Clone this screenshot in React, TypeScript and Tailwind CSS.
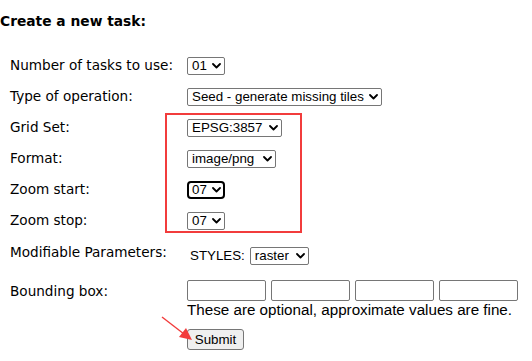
import React from "react";

const label = "font-['DejaVu_Sans',Verdana,sans-serif] text-[13.6px] text-black";
const ctl = "font-['Liberation_Sans',Arial,sans-serif] text-[13.33px] text-black";

function Chevron() {
  return (
    <svg width="9" height="6" viewBox="0 0 9 6" className="shrink-0">
      <path d="M1 1 L4.5 4.5 L8 1" fill="none" stroke="#000" strokeWidth="1.8" strokeLinecap="round" strokeLinejoin="round" />
    </svg>
  );
}

function Select({ value, width, focused }: { value: string; width: string; focused?: boolean }) {
  return (
    <div
      className={`${ctl} ${width} h-[18px] flex items-center justify-between gap-[3px] whitespace-nowrap bg-white ${
        focused ? "border-2 border-black rounded-[4px] pl-[3px] pr-[2px]" : "border border-[#767676] rounded-[2px] pl-[4px] pr-[3px]"
      }`}
    >
      <span className="leading-none">{value}</span>
      <Chevron />
    </div>
  );
}

const rows = [
  { name: "Number of tasks to use:", value: "01", width: "w-[38px]" },
  { name: "Type of operation:", value: "Seed - generate missing tiles", width: "w-[195px]" },
  { name: "Grid Set:", value: "EPSG:3857", width: "w-[95px]" },
  { name: "Format:", value: "image/png", width: "w-[89px]" },
  { name: "Zoom start:", value: "07", width: "w-[38px]", focused: true },
  { name: "Zoom stop:", value: "07", width: "w-[38px]" },
];

export default function App() {
  return (
    <div className="relative w-[532px] h-[361px] bg-white overflow-hidden">
      <h3 className="font-['DejaVu_Sans',Verdana,sans-serif] font-bold text-[13.8px] leading-[20px] pt-[11px] text-black">
        Create a new task:
      </h3>

      <div className="pl-[10px] pt-[19px]">
        {rows.map((r) => (
          <div key={r.name} className="flex items-center h-[31px]">
            <div className={`${label} w-[177px]`}>{r.name}</div>
            <Select value={r.value} width={r.width} focused={r.focused} />
          </div>
        ))}

        <div className="flex items-center h-[40px]">
          <div className={`${label} w-[177px] self-start pt-[6px]`}>Modifiable Parameters:</div>
          <div className="flex items-center gap-[5px]">
            <span className={`${ctl} ml-[3px]`}>STYLES:</span>
            <Select value="raster" width="w-[59px]" />
          </div>
        </div>

        <div className="flex items-start pt-[4px]">
          <div className={`${label} w-[177px] pt-[1px]`}>Bounding box:</div>
          <div className="flex flex-col">
            <div className="flex gap-[5px]">
              {[0, 1, 2, 3].map((i) => (
                <div key={i} className="w-[79px] h-[21px] border border-[#767676] rounded-[2px] bg-white" />
              ))}
            </div>
            <p className="font-['Liberation_Sans',Arial,sans-serif] text-[15.2px] leading-[17px] text-black">
              These are optional, approximate values are fine.
            </p>
            <button className={`${ctl} mt-[11px] w-[57px] h-[21px] bg-[#efefef] border border-[#767676] rounded-[3px]`}>
              Submit
            </button>
          </div>
        </div>
      </div>

      {/* annotation box */}
      <div className="absolute left-[165px] top-[113px] w-[137px] h-[120px] border-2 border-[#f23c3c]" />

      {/* annotation arrow */}
      <svg className="absolute left-0 top-0" width="532" height="361">
        <line x1="162" y1="317" x2="184" y2="334" stroke="#f23c3c" strokeWidth="1.4" />
        <path d="M192 340 L179 337 L186 328 Z" fill="#f23c3c" />
      </svg>
    </div>
  );
}
